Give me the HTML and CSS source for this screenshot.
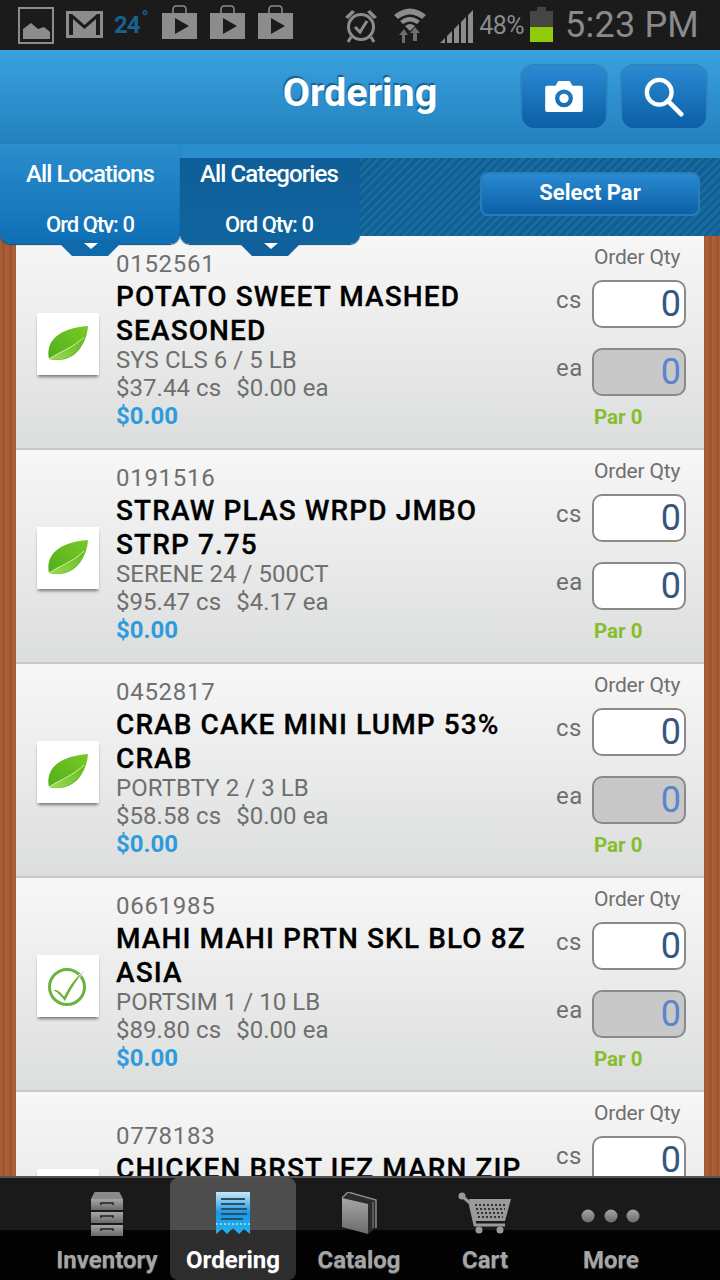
FILE: index.html
```html
<!DOCTYPE html>
<html>
<head>
  <title>Ordering</title>
  <link rel="stylesheet" href="styles.css">
</head>
<body>
<svg class="defs" width="0" height="0">
  <defs>
    <linearGradient id="leafTop" x1="0" y1="1" x2="1" y2="0">
      <stop offset="0" stop-color="#4fae1c"/>
      <stop offset="1" stop-color="#79c926"/>
    </linearGradient>
    <linearGradient id="leafLow" x1="0" y1="1" x2="1" y2="0">
      <stop offset="0" stop-color="#9ddb52"/>
      <stop offset="1" stop-color="#62b820"/>
    </linearGradient>
    <linearGradient id="receiptFill" x1="0" y1="0" x2="0" y2="1">
      <stop offset="0" stop-color="#c9e8f8"/>
      <stop offset="0.5" stop-color="#1c97e4"/>
      <stop offset="1" stop-color="#22b2f0"/>
    </linearGradient>
    <linearGradient id="greyFill" x1="0" y1="0" x2="0" y2="1">
      <stop offset="0" stop-color="#a6a6a6"/>
      <stop offset="1" stop-color="#6a6a6a"/>
    </linearGradient>
    <symbol id="leaf" viewBox="0 0 62 62">
      <path d="M12 46C8 28 22 15 51 13C50 30 38 52 12 46Z" fill="url(#leafTop)"/>
      <path d="M12 46C24 38 36 35 47 24C43 38 31 50 12 46Z" fill="url(#leafLow)"/>
      <path d="M12 46C24 38 36 35 47 24" fill="none" stroke="#d4f0a4" stroke-width="1"/>
    </symbol>
    <symbol id="check" viewBox="0 0 62 62">
      <circle cx="30" cy="32" r="17.500" fill="none" stroke="#6cb33f" stroke-width="3"/>
      <path d="M15 35C20 33 24 37 27 41C32 31 38 22 48 15C40 25 33 36 28 47C24 41 20 37 15 35Z" fill="#6cb33f" stroke="#fff" stroke-width="1"/>
    </symbol>
    <symbol id="play" viewBox="0 0 35 34">
      <path d="M11 8V5Q11 1 14 1H21Q24 1 24 5V8" fill="none" stroke="#8c8c8c" stroke-width="1.500"/>
      <path d="M0 8H35V34H0ZM13 13V29L27 21Z" fill="#8c8c8c" fill-rule="evenodd"/>
    </symbol>
  </defs>
</svg>

<div class="app">
  <div class="status">
    <div class="status-left">
      <svg class="ic-pic" width="36" height="37" viewBox="0 0 36 37">
        <path d="M1 1H35V36H1Z" fill="none" stroke="#8c8c8c" stroke-width="2"/>
        <path d="M5 32V22L13 16L20 22L26 20L32 25V32Z" fill="#8c8c8c"/>
      </svg>
      <svg class="ic-mail" width="37" height="28" viewBox="0 0 37 28">
        <path d="M0 0H37V27H0ZM3 3V24H7V8L18.500 18L30 8V24H34V3H31L18.500 14L6 3Z" fill="#8c8c8c" fill-rule="evenodd"/>
      </svg>
      <span class="temp">24<sup>°</sup></span>
      <svg class="ic-play" width="35" height="34"><use href="#play"/></svg>
      <svg class="ic-play" width="35" height="34"><use href="#play"/></svg>
      <svg class="ic-play" width="35" height="34"><use href="#play"/></svg>
    </div>
    <div class="status-right">
      <svg class="ic-alarm" width="34" height="36" viewBox="0 0 34 36">
        <circle cx="17" cy="20" r="12.500" fill="none" stroke="#8c8c8c" stroke-width="3"/>
        <path d="M11 20L16 25L23 14" fill="none" stroke="#8c8c8c" stroke-width="3"/>
        <path d="M1 10L8 3L11 5L4 12ZM33 10L26 3L23 5L30 12Z" fill="#8c8c8c"/>
        <path d="M7 30L4 35M27 30L30 35" stroke="#8c8c8c" stroke-width="3"/>
      </svg>
      <svg class="ic-wifi" width="34" height="36" viewBox="0 0 34 36">
        <path d="M1 8Q17 -5 33 8L29 12Q17 3 5 12Z" fill="#8c8c8c"/>
        <path d="M7 14Q17 6 27 14L24 17Q17 12 10 17Z" fill="#8c8c8c"/>
        <path d="M12 19Q17 15 22 19L17 24Z" fill="#8c8c8c"/>
        <path d="M9 36V28H6L11 22L15 28H12V36ZM20 34V26H17L22 20L27 26H24V34Z" fill="#6e6e6e"/>
      </svg>
      <svg class="ic-signal" width="33" height="33" viewBox="0 0 33 33">
        <path d="M0 33L5 28V33ZM7 33V26L12 21V33ZM14 33V19L19 14V33ZM21 33V12L26 7V33ZM28 33V5L33 0V33Z" fill="#8c8c8c"/>
      </svg>
      <span class="pct">48%</span>
      <div class="battery"><div class="battery-level"></div></div>
      <span class="clock">5:23 PM</span>
    </div>
  </div>

  <div class="header">
    <span></span>
    <h1>Ordering</h1>
    <div class="header-btns">
      <button class="head-btn">
        <svg class="ic-camera" width="38" height="32" viewBox="0 0 40 34">
          <path d="M2 6H11L14 1H26L29 6H38Q40 6 40 8V32Q40 34 38 34H2Q0 34 0 32V8Q0 6 2 6ZM20 10A9.500 9.500 0 1 0 20 29A9.500 9.500 0 1 0 20 10ZM20 14.500A5 5 0 1 1 20 24.500A5 5 0 1 1 20 14.500Z" fill="#fff" fill-rule="evenodd"/>
        </svg>
      </button>
      <button class="head-btn">
        <svg width="40" height="40" viewBox="0 0 42 42">
          <circle cx="16" cy="16" r="13" fill="none" stroke="#fff" stroke-width="4.500"/>
          <path d="M25 25L39 39" stroke="#fff" stroke-width="5" stroke-linecap="round"/>
        </svg>
      </button>
    </div>
  </div>

  <div class="filters">
    <div class="filters-inner">
      <div class="tab tab-first">
        <span class="tab-name">All Locations</span>
        <span class="tab-qty">Ord Qty: 0</span>
        <span class="tab-arrow"></span>
      </div>
      <div class="tab tab-second">
        <span class="tab-name">All Categories</span>
        <span class="tab-qty">Ord Qty: 0</span>
        <span class="tab-arrow"></span>
      </div>
      <button class="par-btn">Select Par</button>
    </div>
  </div>

  <div class="list">
    <div class="item">
      <div class="thumb"><svg width="62" height="62"><use href="#leaf"/></svg></div>
      <div class="info">
        <div class="code">0152561</div>
        <div class="name">POTATO SWEET MASHED SEASONED</div>
        <div class="pack">SYS CLS 6 / 5 LB</div>
        <div class="price"><span>$37.44 cs</span><span>$0.00 ea</span></div>
        <div class="total">$0.00</div>
      </div>
      <div class="qty">
        <div class="qty-title">Order Qty</div>
        <div class="qty-row"><span>cs</span><div class="qty-box">0</div></div>
        <div class="qty-row"><span>ea</span><div class="qty-box off">0</div></div>
        <div class="par">Par 0</div>
      </div>
    </div>

    <div class="item">
      <div class="thumb"><svg width="62" height="62"><use href="#leaf"/></svg></div>
      <div class="info">
        <div class="code">0191516</div>
        <div class="name">STRAW PLAS WRPD JMBO STRP 7.75</div>
        <div class="pack">SERENE 24 / 500CT</div>
        <div class="price"><span>$95.47 cs</span><span>$4.17 ea</span></div>
        <div class="total">$0.00</div>
      </div>
      <div class="qty">
        <div class="qty-title">Order Qty</div>
        <div class="qty-row"><span>cs</span><div class="qty-box">0</div></div>
        <div class="qty-row"><span>ea</span><div class="qty-box">0</div></div>
        <div class="par">Par 0</div>
      </div>
    </div>

    <div class="item">
      <div class="thumb"><svg width="62" height="62"><use href="#leaf"/></svg></div>
      <div class="info">
        <div class="code">0452817</div>
        <div class="name">CRAB CAKE MINI LUMP 53% CRAB</div>
        <div class="pack">PORTBTY 2 / 3 LB</div>
        <div class="price"><span>$58.58 cs</span><span>$0.00 ea</span></div>
        <div class="total">$0.00</div>
      </div>
      <div class="qty">
        <div class="qty-title">Order Qty</div>
        <div class="qty-row"><span>cs</span><div class="qty-box">0</div></div>
        <div class="qty-row"><span>ea</span><div class="qty-box off">0</div></div>
        <div class="par">Par 0</div>
      </div>
    </div>

    <div class="item">
      <div class="thumb"><svg width="62" height="62"><use href="#check"/></svg></div>
      <div class="info">
        <div class="code">0661985</div>
        <div class="name">MAHI MAHI PRTN SKL BLO 8Z ASIA</div>
        <div class="pack">PORTSIM 1 / 10 LB</div>
        <div class="price"><span>$89.80 cs</span><span>$0.00 ea</span></div>
        <div class="total">$0.00</div>
      </div>
      <div class="qty">
        <div class="qty-title">Order Qty</div>
        <div class="qty-row"><span>cs</span><div class="qty-box">0</div></div>
        <div class="qty-row"><span>ea</span><div class="qty-box off">0</div></div>
        <div class="par">Par 0</div>
      </div>
    </div>

    <div class="item item-last">
      <div class="thumb"><svg width="62" height="62"><use href="#leaf"/></svg></div>
      <div class="info">
        <div class="code">0778183</div>
        <div class="name">CHICKEN BRST IFZ MARN ZIP</div>
      </div>
      <div class="qty">
        <div class="qty-title">Order Qty</div>
        <div class="qty-row"><span>cs</span><div class="qty-box">0</div></div>
      </div>
    </div>
  </div>

  <div class="tabbar">
    <div class="nav">
      <svg width="36" height="44" viewBox="0 0 36 44">
        <path d="M5 1Q5 0 7 0H29Q31 0 31 1L34 7H2Z" fill="#8a8a8a"/>
        <rect x="2" y="7" width="32" height="11" fill="url(#greyFill)"/>
        <rect x="2" y="20" width="32" height="11" fill="url(#greyFill)"/>
        <rect x="2" y="33" width="32" height="11" fill="url(#greyFill)"/>
        <path d="M12 13V11H24V13M12 26V24H24V26M12 39V37H24V39" fill="none" stroke="#222" stroke-width="1.500"/>
      </svg>
      <span>Inventory</span>
    </div>
    <div class="nav nav-on">
      <svg width="36" height="44" viewBox="0 0 36 44">
        <path d="M1 0H35V42L29 37L24 42L18 36L12 42L7 37L1 42Z" fill="url(#receiptFill)"/>
        <path d="M6 7H30M6 12H30M6 17H32M6 22H32M6 27H28" stroke="#27506a" stroke-width="2"/>
        <path d="M1 32H35" stroke="#8fd0ee" stroke-width="2" stroke-dasharray="2 2"/>
      </svg>
      <span>Ordering</span>
    </div>
    <div class="nav">
      <svg width="36" height="44" viewBox="0 0 36 44">
        <path d="M1 6L7 0L35 8V36L27 42Z" fill="#2c2c2c"/>
        <path d="M1 6L7 0L35 8V36" fill="none" stroke="#8a8a8a" stroke-width="1.500"/>
        <path d="M32 10V36" stroke="#6a6a6a" stroke-width="1.500"/>
        <path d="M1 6L27 12V42L1 35Z" fill="url(#greyFill)"/>
      </svg>
      <span>Catalog</span>
    </div>
    <div class="nav">
      <svg width="54" height="44" viewBox="0 0 54 44">
        <circle cx="4" cy="4" r="3.500" fill="#9a9a9a"/>
        <path d="M4 4L12 11L17 33H47" fill="none" stroke="#9a9a9a" stroke-width="3"/>
        <path d="M11 7H53L47 29H16Z" fill="#9a9a9a"/>
        <path d="M17 13H48M18 17H47M19 21H46M20 25H45" stroke="#333" stroke-width="2" stroke-dasharray="2 2"/>
        <circle cx="21" cy="38" r="3.500" fill="#9a9a9a"/>
        <circle cx="42" cy="38" r="3.500" fill="#9a9a9a"/>
      </svg>
      <span>Cart</span>
    </div>
    <div class="nav">
      <svg width="60" height="44" viewBox="0 0 60 44">
        <circle cx="7" cy="24" r="6.500" fill="url(#greyFill)"/>
        <circle cx="30" cy="24" r="6.500" fill="url(#greyFill)"/>
        <circle cx="52" cy="24" r="6.500" fill="url(#greyFill)"/>
      </svg>
      <span>More</span>
    </div>
  </div>
</div>
</body>
</html>
```

FILE: styles.css
```css
html, body {
  margin: 0;
  padding: 0;
}
body {
  font-family: Roboto, "Liberation Sans", sans-serif;
}
.defs {
  display: block;
  height: 0;
}
.app {
  width: 720px;
  height: 1280px;
  display: flex;
  flex-direction: column;
  overflow: hidden;
}

/* status bar */
.status {
  height: 50px;
  flex: none;
  background: #1b1b1b;
  display: flex;
  justify-content: space-between;
  align-items: center;
  padding: 0 21px 0 18px;
  box-sizing: border-box;
}
.status-left, .status-right {
  display: flex;
  align-items: center;
}
.ic-mail { margin-left: 12px; margin-top: -1px; }
.temp {
  margin-left: 11px;
  width: 37px;
  font-size: 24px;
  font-weight: 700;
  color: #17628f;
  letter-spacing: -1px;
}
.temp sup {
  font-size: 18px;
  line-height: 0;
  margin-left: 2px;
}
.ic-play { margin-left: 13px; margin-top: -6px; }
.temp + .ic-play { margin-left: 11px; }
.ic-wifi { margin-left: 15px; }
.ic-signal { margin-left: 13px; margin-top: 2px; }
.pct {
  margin-left: 6px;
  font-size: 25px;
  color: #8a8a8a;
  letter-spacing: -0.5px;
}
.battery {
  width: 23px;
  height: 31px;
  margin: 3px 0 0 6px;
  background: #454545;
  display: flex;
  align-items: flex-end;
  position: relative;
}
.battery::before {
  content: "";
  position: absolute;
  left: 7px;
  top: -4px;
  width: 9px;
  height: 4px;
  background: #454545;
}
.battery-level {
  width: 100%;
  height: 15px;
  background: #8fcb0a;
}
.clock {
  margin-left: 12px;
  font-size: 36px;
  color: #8a8a8a;
  letter-spacing: 0.2px;
}

/* header */
.header {
  height: 94px;
  flex: none;
  box-sizing: border-box;
  background: linear-gradient(#3aa1de, #2281bd);
  display: grid;
  grid-template-columns: 1fr auto 1fr;
  align-items: center;
}
.header h1 {
  margin: 0 0 10px;
  font-size: 39.500px;
  font-weight: 700;
  color: #fff;
  text-shadow: -1px -2px 1px #14608f;
}
.header-btns {
  display: flex;
  justify-content: flex-end;
  gap: 12px;
  padding-right: 12px;
}
.head-btn {
  width: 88px;
  height: 66px;
  padding: 0;
  border: 2px solid #2d86c2;
  border-radius: 14px;
  background: linear-gradient(#2a8ad2, #0b5fa5);
  display: flex;
  align-items: center;
  justify-content: center;
}
.ic-camera { margin-top: -3px; }

/* location / category filters */
.filters {
  height: 92px;
  flex: none;
  box-sizing: border-box;
  padding-top: 14px;
  background: #2a8dcc;
  position: relative;
  z-index: 2;
}
.filters-inner {
  height: 78px;
  display: flex;
  align-items: flex-start;
  background: repeating-linear-gradient(135deg, #0f5f94 0 3px, #1a6a9e 3px 6px);
}
.tab {
  width: 180px;
  flex: none;
  box-sizing: border-box;
  position: relative;
  text-align: center;
  color: #fff;
  border-radius: 0 0 10px 10px;
  box-shadow: 0 1px 1px #0d4c78;
}
.tab-first {
  height: 100px;
  margin-top: -14px;
  padding-top: 15px;
  background: linear-gradient(#2a8dcc, #0f6fb5);
}
.tab-second {
  height: 86px;
  padding: 1px 2px 0 0;
  background: linear-gradient(#0f5e98, #10659f);
}
.tab-name {
  display: block;
  height: 30px;
  line-height: 30px;
  font-size: 24px;
  font-weight: 500;
  letter-spacing: -0.9px;
}
.tab-qty {
  display: block;
  height: 22px;
  margin-top: 22px;
  line-height: 27px;
  font-size: 22px;
  font-weight: 500;
  letter-spacing: -0.95px;
  overflow: hidden;
}
.tab-arrow {
  position: absolute;
  left: 60px;
  bottom: -12px;
  width: 60px;
  height: 16px;
  clip-path: polygon(0 0, 100% 0, 100% 25%, 80% 100%, 20% 100%, 0 25%);
  background: #0f6aac;
}
.tab-second .tab-arrow {
  background: #10619b;
}
.tab-arrow::after {
  content: "";
  position: absolute;
  left: 24px;
  top: 3px;
  border: 7px solid transparent;
  border-top: 6px solid #fff;
  border-bottom: 0;
}
.par-btn {
  width: 220px;
  height: 44px;
  margin: 14px 0 0 120px;
  padding: 0 0 4px;
  border: 2px solid #2a7db8;
  border-radius: 8px;
  background: linear-gradient(#2a8ad2, #0b5fa5);
  color: #fff;
  font-family: Roboto, sans-serif;
  font-size: 22px;
  font-weight: 700;
}

/* product list */
.list {
  flex: 1;
  min-height: 0;
  overflow: hidden;
  padding: 0 16px;
  background: repeating-linear-gradient(90deg, #a85c38 0 2px, #a0552f 2px 5px, #ab603d 5px 7px);
}
.item {
  height: 214px;
  box-sizing: border-box;
  display: flex;
  background: linear-gradient(#f7f7f7, #dcdedd);
  border-bottom: 2px solid #c6c8c8;
}
.thumb {
  width: 100px;
  flex: none;
  display: flex;
  align-items: center;
  justify-content: center;
  padding: 4px 17px 0 21px;
  box-sizing: border-box;
}
.thumb svg {
  flex: none;
  background: #fff;
  box-shadow: 0 3px 3px -1px #777;
}
.info {
  width: 440px;
  flex: none;
  padding-top: 14px;
  box-sizing: border-box;
  color: #6f6f6f;
}
.item-last .info {
  padding-top: 30px;
}
.code {
  height: 28px;
  line-height: 28px;
  font-size: 24px;
  letter-spacing: 0.7px;
}
.name {
  width: 420px;
  margin-top: 2px;
  line-height: 34px;
  font-size: 28px;
  font-weight: 500;
  letter-spacing: 1.1px;
  color: #000;
  -webkit-text-stroke: 0.3px #000;
}
.pack, .price {
  height: 28px;
  line-height: 28px;
  font-size: 24px;
  letter-spacing: 0.05px;
}
.pack {
  margin-top: -2px;
}
.price {
  display: flex;
  gap: 15px;
}
.total {
  height: 28px;
  line-height: 28px;
  font-size: 24px;
  font-weight: 700;
  color: #2f9bdc;
}
.qty {
  flex: 1;
  color: #6f6f6f;
}
.qty-title {
  height: 44px;
  padding-left: 38px;
  line-height: 42px;
  font-size: 21px;
  letter-spacing: -0.2px;
}
.qty-row {
  display: flex;
  justify-content: space-between;
  height: 48px;
  margin-bottom: 20px;
  margin-right: 18px;
  font-size: 24px;
  line-height: 40px;
  letter-spacing: 0.5px;
}
.qty-box {
  width: 94px;
  height: 48px;
  box-sizing: border-box;
  border: 2px solid #8a8a8a;
  border-radius: 10px;
  background: #fff;
  text-align: right;
  padding-right: 3px;
  font-size: 36px;
  line-height: 44px;
  letter-spacing: 0;
  color: #34577f;
}
.qty-box.off {
  background: #c8c8c8;
  color: #5a84cc;
}
.par {
  margin-top: -13px;
  padding-left: 38px;
  line-height: 28px;
  font-size: 20.500px;
  font-weight: 700;
  color: #86bd2e;
}

/* bottom nav */
.tabbar {
  height: 104px;
  flex: none;
  box-sizing: border-box;
  border-top: 2px solid #555;
  padding: 0 45px 0 44px;
  background: linear-gradient(#1a1a1a 0 52px, #030303 52px);
  display: flex;
  position: relative;
  z-index: 2;
}
.nav {
  width: 126px;
  flex: none;
  display: flex;
  flex-direction: column;
  align-items: center;
  padding-top: 14px;
  box-sizing: border-box;
  color: #a6a6a6;
  font-size: 24px;
  font-weight: 700;
}
.nav span {
  margin-top: 9px;
  line-height: 30px;
  text-shadow: 0 1px 1px #555;
}
.nav-on {
  color: #fff;
  border-radius: 8px;
  background: linear-gradient(#4d4d4d 0 52px, #2d2d2d 52px);
}
```
